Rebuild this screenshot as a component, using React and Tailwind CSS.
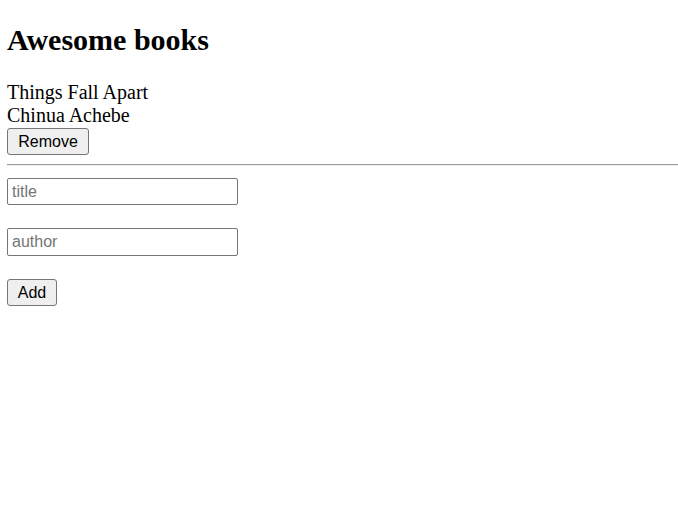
import React, { useState } from 'react';

const serif = "font-['Liberation_Serif',serif]";
const sans = "font-['Liberation_Sans',Arial,sans-serif]";

export default function App() {
  const [books, setBooks] = useState([{ title: 'Things Fall Apart', author: 'Chinua Achebe' }]);
  const [title, setTitle] = useState('');
  const [author, setAuthor] = useState('');

  const add = () => {
    if (!title || !author) return;
    setBooks([...books, { title, author }]);
    setTitle('');
    setAuthor('');
  };

  return (
    <div className={`min-h-screen bg-white text-black ${serif}`}>
      <div className="pl-[7px] pt-[22px]">
        <h1 className="text-[30px] font-bold leading-[35px]">Awesome books</h1>

        <div className="mt-[24px]">
          {books.map((b, i) => (
            <div key={i}>
              <p className="text-[20px] leading-[23px]">{b.title}</p>
              <p className="text-[20px] leading-[23px]">{b.author}</p>
              <button
                onClick={() => setBooks(books.filter((_, j) => j !== i))}
                className={`mt-[1px] h-[27px] w-[82px] rounded-[3px] border border-[#767676] bg-[#efefef] text-[16px] leading-none text-black ${sans}`}
              >
                Remove
              </button>
            </div>
          ))}
        </div>
      </div>

      <hr className="ml-[7px] mt-[9px] border-t border-b border-t-[#9a9a9a] border-b-[#eeeeee]" />

      <div className="pl-[7px] pt-[12px] flex flex-col items-start">
        <input
          value={title}
          onChange={(e) => setTitle(e.target.value)}
          placeholder="title"
          className={`h-[27px] w-[231px] rounded-[2px] border border-[#767676] px-[4px] text-[16px] placeholder:text-[#757575] outline-none ${sans}`}
        />
        <input
          value={author}
          onChange={(e) => setAuthor(e.target.value)}
          placeholder="author"
          className={`mt-[23px] h-[28px] w-[231px] rounded-[2px] border border-[#767676] px-[4px] text-[16px] placeholder:text-[#757575] outline-none ${sans}`}
        />
        <button
          onClick={add}
          className={`mt-[23px] h-[27px] w-[50px] rounded-[3px] border border-[#767676] bg-[#efefef] text-[16px] leading-none text-black ${sans}`}
        >
          Add
        </button>
      </div>
    </div>
  );
}
